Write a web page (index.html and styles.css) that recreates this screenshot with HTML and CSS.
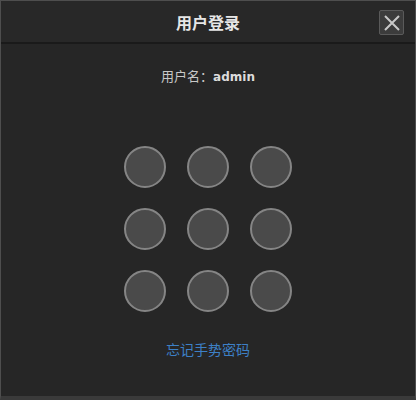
FILE: index.html
```html
<!DOCTYPE html>
<html lang="zh">
<head>
<meta charset="utf-8">
<link rel="stylesheet" href="styles.css">
</head>
<body>
<div class="dialog">
  <div class="header">
    <span class="title">用户登录</span>
    <button class="close" aria-label="关闭">
      <svg width="18" height="18" viewBox="0 0 18 18"><path d="M2 2L16 16M16 2L2 16" stroke="#c8c8c8" stroke-width="2" fill="none"/></svg>
    </button>
  </div>
  <div class="body">
    <div class="user">用户名：<b>admin</b></div>
    <div class="grid">
      <span class="dot"></span><span class="dot"></span><span class="dot"></span>
      <span class="dot"></span><span class="dot"></span><span class="dot"></span>
      <span class="dot"></span><span class="dot"></span><span class="dot"></span>
    </div>
    <a class="forgot" href="#">忘记手势密码</a>
  </div>
</div>
</body>
</html>
```
FILE: styles.css
```css
html, body {
  margin: 0;
  padding: 0;
  background: #1c1c1c;
}
body {
  font-family: "Noto Sans CJK SC", "Liberation Sans", sans-serif;
}
.dialog {
  box-sizing: border-box;
  width: 416px;
  height: 400px;
  border: 1px solid #4e4e4e;
  border-bottom: 4px solid #3a3a3a;
  background: #262626;
  display: flex;
  flex-direction: column;
}
.header {
  position: relative;
  height: 41px;
  border-bottom: 2px solid #1a1a1a;
  display: flex;
  align-items: center;
  justify-content: center;
  background: #282828;
}
.title {
  color: #e6e6e6;
  font-size: 16px;
  font-weight: bold;
  line-height: 20px;
  margin-top: 1px;
}
.close {
  position: absolute;
  right: 11px;
  top: 9px;
  width: 25px;
  height: 25px;
  padding: 0;
  border: 1px solid #5a5a5a;
  border-radius: 2px;
  background: #3c3c3c;
  display: flex;
  align-items: center;
  justify-content: center;
}
.body {
  display: flex;
  flex-direction: column;
  align-items: center;
}
.user {
  margin-top: 23px;
  color: #c8c8c8;
  font-size: 13px;
  line-height: 18px;
}
.user b {
  font-family: "DejaVu Sans", sans-serif;
  font-size: 12px;
  color: #dcdcdc;
}
.grid {
  margin-top: 60px;
  display: grid;
  grid-template-columns: repeat(3, 42px);
  grid-auto-rows: 42px;
  column-gap: 21px;
  row-gap: 20px;
}
.dot {
  box-sizing: border-box;
  width: 42px;
  height: 42px;
  border-radius: 50%;
  border: 2px solid #858585;
  background: #4a4a4a;
}
.forgot {
  margin-top: 28px;
  color: #3d80c6;
  font-size: 14px;
  line-height: 18px;
  text-decoration: none;
}
```
